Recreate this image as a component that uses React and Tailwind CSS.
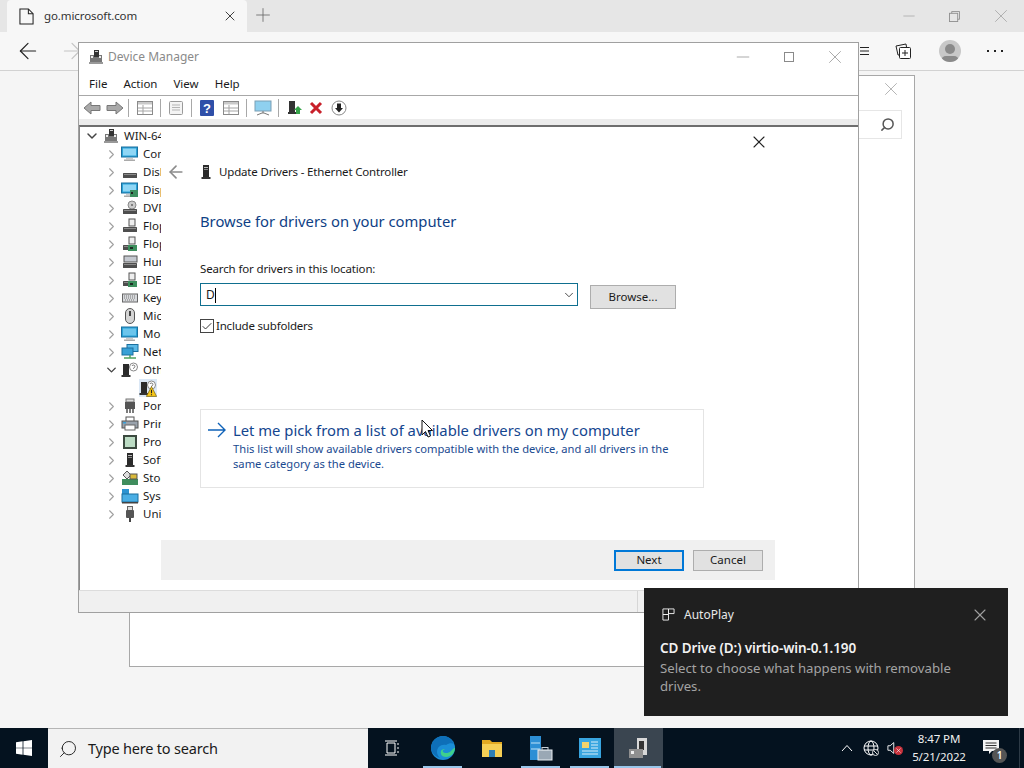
import React from 'react';
import {
  ArrowLeft, ArrowRight, X, Plus, Minus, ChevronDown, ChevronRight, Check, Search,
} from 'lucide-react';

// small device glyphs for the tree, roughly the old mmc icons
function Tower({ className = '' }) {
  return (
    <svg viewBox="0 0 16 16" className={className}>
      <rect x="5" y="1" width="6" height="12" fill="#2b2b2b" />
      <rect x="6" y="3" width="4" height="1" fill="#bbb" />
      <rect x="6" y="5" width="4" height="1" fill="#888" />
      <rect x="3.5" y="13" width="9" height="2" fill="#333" />
    </svg>
  );
}

function Computer() {
  return (
    <svg viewBox="0 0 16 16" className="w-4 h-4">
      <rect x="2" y="6" width="12" height="7" fill="#777" />
      <rect x="3" y="7" width="2" height="2" fill="#eee" />
      <rect x="11" y="7" width="2" height="2" fill="#eee" />
      <rect x="6" y="1" width="5" height="7" fill="#333" />
      <rect x="7" y="2" width="3" height="1" fill="#ccc" />
      <rect x="1" y="13" width="14" height="2" fill="#999" />
    </svg>
  );
}

function Monitor({ card, small }) {
  return (
    <svg viewBox="0 0 18 16" className="w-[18px] h-4">
      <rect x="0.5" y="1" width="16" height="10" fill="#29a3d8" stroke="#1b6f9e" />
      <rect x="2" y="2.5" width="13" height="7" fill={small ? '#6cc5ec' : '#8fd6f5'} />
      <rect x="5" y="12" width="7" height="1.5" fill="#ccc" />
      <rect x="3" y="13.5" width="11" height="1.5" fill="#aaa" />
      {card && <rect x="9" y="8" width="8" height="7" fill="#3d8f5f" />}
      {card && <rect x="10" y="10" width="2" height="2" fill="#222" />}
    </svg>
  );
}

function Drive({ top, card, kb }) {
  return (
    <svg viewBox="0 0 16 16" className="w-4 h-4">
      {top === 'disc' && <circle cx="10" cy="5" r="4" fill="#ccc" stroke="#888" />}
      {top === 'disc' && <circle cx="10" cy="5" r="1" fill="#666" />}
      {top === 'floppy' && <rect x="7" y="1" width="6" height="7" fill="#eee" stroke="#555" />}
      {kb && <rect x="2" y="2" width="13" height="6" fill="#c5c9d0" stroke="#555" />}
      <rect x="1" y="9" width="14" height="5" rx="0.5" fill="#4e4e4e" />
      <rect x="2" y="10" width="12" height="1" fill="#8a8a8a" />
      {card && <rect x="6" y="9" width="9" height="6" fill="#3c8e5c" />}
      {card && <rect x="8" y="11" width="3" height="2" fill="#1d2b22" />}
    </svg>
  );
}

function TreeGlyph({ kind }) {
  switch (kind) {
    case 'computer': return <Monitor />;
    case 'disk': return <Drive />;
    case 'display': return <Monitor card />;
    case 'dvd': return <Drive top="disc" />;
    case 'floppy': return <Drive top="floppy" />;
    case 'floppycard': return <Drive top="floppy" card />;
    case 'hid': return <Drive kb />;
    case 'ide': return <Drive top="floppy" card />;
    case 'keyboard':
      return (
        <svg viewBox="0 0 16 16" className="w-4 h-4">
          <rect x="0.5" y="4" width="15" height="8" fill="#d8dadd" stroke="#666" />
          <path d="M2 6h12M2 8h12M3 10h10" stroke="#777" strokeDasharray="1 1" />
        </svg>
      );
    case 'mouse':
      return (
        <svg viewBox="0 0 16 16" className="w-4 h-4">
          <rect x="3.5" y="0.5" width="9" height="15" rx="4.5" fill="#d5d5d5" stroke="#555" />
          <rect x="7" y="3" width="2" height="5" fill="#444" />
        </svg>
      );
    case 'monitor': return <Monitor small />;
    case 'network':
      return (
        <svg viewBox="0 0 18 16" className="w-[18px] h-4">
          <rect x="6" y="0.5" width="11" height="7" fill="#5cb9e6" stroke="#1b6f9e" />
          <rect x="1" y="4" width="11" height="7" fill="#37a0d6" stroke="#1b6f9e" />
          <path d="M3 14h12M9 11v3" stroke="#4fa35f" strokeWidth="1.5" />
        </svg>
      );
    case 'other':
      return (
        <svg viewBox="0 0 18 16" className="w-[18px] h-4">
          <rect x="2" y="2" width="6" height="11" fill="#2b2b2b" />
          <rect x="0.5" y="13" width="9" height="2" fill="#333" />
          <circle cx="12.5" cy="5" r="4" fill="#fff" stroke="#888" />
          <path d="M11 4a1.5 1.5 0 1 1 1.5 2v.7" stroke="#777" fill="none" />
        </svg>
      );
    case 'port':
      return (
        <svg viewBox="0 0 16 16" className="w-4 h-4">
          <rect x="4" y="1" width="8" height="3" fill="#ddd" stroke="#777" />
          <rect x="3" y="4" width="10" height="7" fill="#555" />
          <path d="M5 11v4M8 11v4M11 11v4" stroke="#444" strokeWidth="1.4" />
        </svg>
      );
    case 'printer':
      return (
        <svg viewBox="0 0 18 16" className="w-[18px] h-4">
          <rect x="5" y="1" width="8" height="5" fill="#fff" stroke="#555" />
          <rect x="1" y="5" width="16" height="7" fill="#9aa3ad" stroke="#555" />
          <rect x="4" y="9" width="10" height="5" fill="#fff" stroke="#666" />
          <rect x="2" y="6" width="3" height="1.5" fill="#3aa0d8" />
        </svg>
      );
    case 'cpu':
      return (
        <svg viewBox="0 0 16 16" className="w-4 h-4">
          <rect x="1" y="1" width="14" height="14" fill="#3c4a40" />
          <rect x="3" y="3" width="10" height="10" fill="#bcdcc4" />
        </svg>
      );
    case 'software': return <Tower className="w-4 h-4" />;
    case 'storage':
      return (
        <svg viewBox="0 0 18 16" className="w-[18px] h-4">
          <path d="M2 5l4-4 4 4-4 4z" fill="#ddd" stroke="#555" />
          <rect x="1" y="9" width="16" height="6" fill="#3f8d5d" />
          <rect x="9" y="4" width="7" height="5" fill="#d9b93a" stroke="#555" />
        </svg>
      );
    case 'system':
      return (
        <svg viewBox="0 0 18 16" className="w-[18px] h-4">
          <rect x="1" y="1" width="7" height="5" fill="#2c93d1" />
          <rect x="1" y="6" width="16" height="8" fill="#4aaee4" stroke="#1b6f9e" />
          <rect x="1" y="14" width="16" height="1.5" fill="#444" />
        </svg>
      );
    case 'usb':
      return (
        <svg viewBox="0 0 16 16" className="w-4 h-4">
          <rect x="5.5" y="0.5" width="5" height="4" fill="#ddd" stroke="#666" />
          <rect x="4" y="4" width="8" height="8" rx="1" fill="#555" />
          <path d="M8 12v4" stroke="#444" strokeWidth="2" />
        </svg>
      );
    default: return null;
  }
}

const treeRows = [
  { name: 'Computer', kind: 'computer' },
  { name: 'Disk drives', kind: 'disk' },
  { name: 'Display adapters', kind: 'display' },
  { name: 'DVD/CD-ROM', kind: 'dvd' },
  { name: 'Floppy disk', kind: 'floppy' },
  { name: 'Floppy drive', kind: 'floppycard' },
  { name: 'Human Interface', kind: 'hid' },
  { name: 'IDE ATA', kind: 'ide' },
  { name: 'Keyboards', kind: 'keyboard' },
  { name: 'Mice', kind: 'mouse' },
  { name: 'Monitors', kind: 'monitor' },
  { name: 'Network', kind: 'network' },
  { name: 'Other devices', kind: 'other', open: true },
  { name: '', kind: 'child' },
  { name: 'Ports', kind: 'port' },
  { name: 'Print queues', kind: 'printer' },
  { name: 'Processors', kind: 'cpu' },
  { name: 'Software', kind: 'software' },
  { name: 'Storage', kind: 'storage' },
  { name: 'System', kind: 'system' },
  { name: 'Universal', kind: 'usb' },
];

function WarnBadge() {
  return (
    <svg viewBox="0 0 10 10" className="w-[11px] h-[11px] absolute right-0 bottom-0">
      <path d="M5 0.5L9.7 9.5H0.3z" fill="#f5c518" stroke="#6b5a10" strokeWidth="0.6" />
      <path d="M5 3.5v3M5 7.5v1" stroke="#222" strokeWidth="1" />
    </svg>
  );
}

function TreeRow({ row }) {
  if (row.kind === 'child') {
    return (
      <div className="h-[18px] flex items-center pl-[59px]">
        <div className="relative w-[18px] h-[18px] bg-[#dbe8f6] flex items-center">
          <TreeGlyph kind="other" />
          <WarnBadge />
        </div>
      </div>
    );
  }
  return (
    <div className="h-[18px] flex items-center pl-[24px] whitespace-nowrap">
      <span className="w-[15px] shrink-0 flex justify-center">
        {row.open
          ? <ChevronDown size={16} strokeWidth={2.2} className="text-[#444]" />
          : <ChevronRight size={17} strokeWidth={1.7} className="text-[#a0a0a0]" />}
      </span>
      <span className="ml-px w-5 shrink-0 flex justify-center"><TreeGlyph kind={row.kind} /></span>
      <span className="ml-[3px] text-[11.5px] text-[#1a1a1a]">{row.name}</span>
    </div>
  );
}

function ToolSep() {
  return <span className="w-px h-[18px] bg-[#a8a8a8] mx-[7px]" />;
}

function SheetIcon({ children }) {
  return (
    <svg viewBox="0 0 16 16" className="w-4 h-4">
      <rect x="0.5" y="1.5" width="15" height="13" fill="#fff" stroke="#8a8a8a" />
      <rect x="1" y="2" width="14" height="2.5" fill="#c9c9c9" />
      <path d="M1 8h14M1 11h14M6 5v9" stroke="#a5a5a5" />
      {children}
    </svg>
  );
}

function DeviceToolbar() {
  return (
    <div className="h-[23px] flex items-center pl-[4px] bg-white">
      <svg viewBox="0 0 18 14" className="w-[18px] h-[14px]">
        <path d="M8 1L1 7l7 6V9.5h9v-5H8z" fill="#a9a9a9" stroke="#777" />
      </svg>
      <svg viewBox="0 0 18 14" className="w-[18px] h-[14px] ml-[5px]">
        <path d="M10 1l7 6-7 6V9.5H1v-5h9z" fill="#a9a9a9" stroke="#777" />
      </svg>
      <span className="w-px h-[18px] bg-[#a8a8a8] ml-[4px] mr-[8px]" />
      <SheetIcon />
      <ToolSep />
      <svg viewBox="0 0 16 16" className="w-4 h-4">
        <rect x="1.5" y="1.5" width="13" height="13" rx="1" fill="#f4f4f4" stroke="#9a9a9a" />
        <path d="M4 5h8M4 7.5h8M4 10h8" stroke="#b5b5b5" />
      </svg>
      <ToolSep />
      <svg viewBox="0 0 14 16" className="w-[14px] h-4 mx-px">
        <rect width="14" height="16" rx="1" fill="#2f4fa8" />
        <text x="7" y="13" textAnchor="middle" fontSize="13" fontWeight="700" fill="#fff" fontFamily="Liberation Sans, sans-serif">?</text>
      </svg>
      <span className="w-[8px]" />
      <SheetIcon />
      <ToolSep />
      <svg viewBox="0 0 18 16" className="w-[18px] h-4">
        <rect x="1" y="1" width="16" height="10" fill="#8fd0ef" stroke="#7b9fb5" />
        <path d="M9 11v2M3 15l5-2h2l5 2" stroke="#777" fill="none" />
      </svg>
      <span className="w-px h-[18px] bg-[#a8a8a8] ml-[6px] mr-[8px]" />
      <svg viewBox="0 0 16 16" className="w-4 h-4">
        <rect x="2" y="1" width="6" height="11" fill="#333" />
        <rect x="1" y="12" width="8" height="2" fill="#333" />
        <path d="M11 6l4 4h-2v4H9v-4H7z" fill="#37a34a" />
      </svg>
      <span className="w-[6px]" />
      <svg viewBox="0 0 14 14" className="w-[14px] h-[14px]">
        <path d="M2 2l10 10M12 2L2 12" stroke="#c8202a" strokeWidth="3" />
      </svg>
      <span className="w-[8px]" />
      <svg viewBox="0 0 16 16" className="w-4 h-4">
        <circle cx="8" cy="8" r="7" fill="#fff" stroke="#888" />
        <path d="M6 3.5h4V8h2l-4 4.5L4 8h2z" fill="#222" />
      </svg>
    </div>
  );
}

function UpdateDriversDialog() {
  return (
    <div className="w-[614px] h-[453px] bg-white flex flex-col">
      <div className="flex-1 flex flex-col">
        <div className="h-[25px] flex justify-end items-end pr-[6px]">
          <X size={20} strokeWidth={1.3} className="text-[#222]" />
        </div>
        <div className="mt-[10px] h-[20px] flex items-center pl-[5px]">
          <ArrowLeft size={20} strokeWidth={2} className="text-[#8c8c8c]" />
          <Tower className="w-4 h-4 ml-[12px]" />
          <span className="ml-[5px] text-[11.5px] text-[#1a1a1a] tracking-[-0.17px]">Update Drivers - Ethernet Controller</span>
        </div>
        <div className="pl-[39px] pr-[71px] flex-1 flex flex-col">
          <h1 className="mt-[27px] text-[14.8px] leading-[24px] text-[#0f3f85] font-normal">Browse for drivers on your computer</h1>
          <div className="mt-[28px] text-[11.5px] leading-[16px] text-[#1a1a1a] tracking-[-0.14px]">Search for drivers in this location:</div>
          <div className="mt-[6px] flex items-start">
            <div className="w-[378px] h-[23px] border border-[#0f6f8f] flex items-center pl-[5px]">
              <span className="mt-px text-[12px] text-[#1a1a1a]">D</span>
              <span className="mt-px w-px h-[15px] bg-black" />
              <ChevronDown size={14} strokeWidth={1.5} className="ml-auto mr-[1px] text-[#333]" />
            </div>
            <button className="ml-[12px] mt-[2px] w-[86px] h-[24px] bg-[#e1e1e1] border border-[#adadad] text-[11.5px] text-[#1a1a1a]">Browse...</button>
          </div>
          <label className="mt-[9px] flex items-center">
            <span className="w-[14px] h-[14px] border border-[#444] flex items-center justify-center">
              <Check size={13} strokeWidth={1.8} className="text-[#222]" />
            </span>
            <span className="ml-[2px] text-[11.5px] text-[#1a1a1a] leading-[16px] tracking-[-0.2px]">Include subfolders</span>
          </label>
          <div className="mt-[75px] h-[79px] border border-[#e4e4e4] flex pl-[7px] pt-[9px]">
            <svg viewBox="0 0 18 16" className="w-[18px] h-4 mt-[3px] shrink-0">
              <path d="M0 8h17M10 1l7 7-7 7" fill="none" stroke="#0f62b8" strokeWidth="1.4" />
            </svg>
            <div className="ml-[7px]">
              <div className="text-[14.8px] leading-[22px] text-[#14468f]">Let me pick from a list of available drivers on my computer</div>
              <div className="text-[11.2px] leading-[15px] text-[#1a4a90] w-[450px]">This list will show available drivers compatible with the device, and all drivers in the same category as the device.</div>
            </div>
          </div>
        </div>
      </div>
      <div className="h-[40px] bg-[#f0f0f0] flex items-center justify-end gap-[9px] pr-[12px]">
        <button className="w-[70px] h-[21px] bg-[#e1e1e1] border-2 border-[#0078d7] text-[11.5px] leading-none text-[#1a1a1a]">Next</button>
        <button className="w-[70px] h-[21px] bg-[#e1e1e1] border border-[#adadad] text-[11.5px] leading-none text-[#1a1a1a]">Cancel</button>
      </div>
    </div>
  );
}

function DeviceManager() {
  return (
    <div className="absolute left-[78px] top-[42px] w-[781px] h-[571px] bg-white border border-[#a0a0a0] flex flex-col">
      <div className="h-[28px] flex items-center pl-[9px] shrink-0">
        <span className="w-4 h-4"><Computer /></span>
        <span className="ml-[4px] text-[12px] text-[#8a8a8a]">Device Manager</span>
        <Minus size={20} strokeWidth={1} className="ml-auto text-[#9a9a9a]" />
        <svg viewBox="0 0 10 10" className="w-[10px] h-[10px] ml-[31px]">
          <rect x="0.5" y="0.5" width="9" height="9" fill="none" stroke="#8a8a8a" />
        </svg>
        <X size={22} strokeWidth={0.9} className="ml-[30px] mr-[12px] text-[#999]" />
      </div>
      <div className="h-[25px] shrink-0 border-b border-[#a8a8a8] flex items-center pl-[10px] pt-[2px] gap-[16px] text-[11.5px] text-[#1a1a1a]">
        <span>File</span><span>Action</span><span>View</span><span>Help</span>
      </div>
      <DeviceToolbar />
      <div className="h-[6px] bg-[#ececec] shrink-0" />
      <div className="flex-1 min-h-0 flex border-t-2 border-[#6e6e6e] border-l border-l-[#8a8a8a]">
        <div className="w-[81px] shrink-0 overflow-hidden">
          <div className="h-[18px] flex items-center pl-[4px] whitespace-nowrap">
            <ChevronDown size={16} strokeWidth={2.2} className="text-[#444] shrink-0" />
            <span className="ml-[3px] w-4 h-4 shrink-0"><Computer /></span>
            <span className="ml-[5px] text-[11.5px] text-[#1a1a1a]">WIN-64TOOLS</span>
          </div>
          {treeRows.map((row, i) => <TreeRow key={i} row={row} />)}
        </div>
        <UpdateDriversDialog />
      </div>
      <div className="h-[22px] shrink-0 bg-[#f0f0f0] border-t border-[#dcdcdc] flex">
        <span className="ml-[558px] w-px bg-[#d6d6d6]" />
      </div>
    </div>
  );
}

function BrowserChrome() {
  return (
    <div className="flex-1 flex flex-col bg-[#f5f5f5]">
      <div className="h-[32px] bg-[#e6e6e6] flex items-end">
        <div className="ml-[7px] w-[240px] h-[32px] bg-[#f7f7f7] rounded-t-[4px] flex items-center pl-[12px] pr-[9px]">
          <svg viewBox="0 0 16 18" className="w-[15px] h-[17px]">
            <path d="M1 1h9l5 5v11H1z" fill="none" stroke="#222" strokeWidth="1.1" />
            <path d="M10 1v5h5" fill="none" stroke="#222" strokeWidth="1.1" />
          </svg>
          <span className="ml-[10px] text-[11.5px] text-[#333] tracking-[-0.1px]">go.microsoft.com</span>
          <X size={16} strokeWidth={1.4} className="ml-auto text-[#333]" />
        </div>
        <Plus size={22} strokeWidth={0.9} className="ml-[5px] mb-[6px] text-[#666]" />
        <div className="ml-auto flex items-center h-[32px] text-[#a5a5a5]">
          <Minus size={18} strokeWidth={1} />
          <svg viewBox="0 0 12 12" className="w-[11px] h-[11px] ml-[31px]">
            <rect x="0.5" y="2.5" width="9" height="9" fill="none" stroke="#8f8f8f" />
            <path d="M3 2.5V0.5h8.5V9H9.5" fill="none" stroke="#8f8f8f" />
          </svg>
          <X size={22} strokeWidth={0.9} className="ml-[30px] mr-[12px]" />
        </div>
      </div>
      <div className="h-[39px] bg-[#f7f7f7] border-b border-[#d2d2d2] flex items-center">
        <ArrowLeft size={26} strokeWidth={1.1} className="ml-[15px] text-[#222]" />
        <ArrowRight size={26} strokeWidth={1.1} className="ml-[18px] text-[#c4c4c4]" />
        <div className="ml-auto flex items-center">
          <svg viewBox="0 0 12 10" className="w-[12px] h-[10px]">
            <path d="M3 1.5h9M3 5h9M3 8.5h9" fill="none" stroke="#222" />
          </svg>
          <svg viewBox="0 0 18 18" className="w-[18px] h-[18px] ml-[26px]">
            <rect x="4.5" y="5.5" width="11" height="11" rx="1" fill="#fff" stroke="#222" />
            <path d="M4 13H3L1 4l10-2 .5 3" fill="none" stroke="#222" />
            <path d="M10 8v6M7 11h6" stroke="#222" />
          </svg>
          <span className="ml-[26px] w-[22px] h-[22px] rounded-full bg-[#c8c8c8] relative overflow-hidden flex justify-center">
            <span className="mt-[4px] w-[10px] h-[10px] rounded-full bg-[#8a8a8a]" />
            <span className="absolute -bottom-[4px] w-[18px] h-[10px] rounded-full bg-[#8a8a8a]" />
          </span>
          <span className="ml-[26px] mr-[21px] flex gap-[5px]">
            <span className="w-[2px] h-[2px] bg-[#222]" />
            <span className="w-[2px] h-[2px] bg-[#222]" />
            <span className="w-[2px] h-[2px] bg-[#222]" />
          </span>
        </div>
      </div>
    </div>
  );
}

function PageDialog() {
  return (
    <div className="absolute left-[129px] top-[75px] w-[786px] h-[592px] bg-white border border-[#a8a8a8] flex flex-col items-end">
      <X size={22} strokeWidth={0.9} className="mt-[2px] mr-[12px] text-[#a5a5a5]" />
      <div className="mt-[10px] mr-[12px] w-[43px] h-[29px] border border-[#e6e6e6] border-l-0 flex items-center justify-end pr-[6px]">
        <Search size={15} strokeWidth={2.4} className="text-[#555] -scale-x-100" />
      </div>
    </div>
  );
}

function Toast() {
  return (
    <div className="absolute left-[644px] top-[588px] w-[364px] h-[128px] bg-[#1f1f1f] px-[16px] flex flex-col">
      <div className="h-[21px] mt-[16px] flex items-center">
        <svg viewBox="0 0 14 14" className="w-[13px] h-[13px] ml-[2px]">
          <path d="M1 1h6v6H1zM7 1h6v5H7zM1 7h6v6H1z" fill="none" stroke="#f0f0f0" strokeWidth="1" />
        </svg>
        <span className="ml-[9px] text-[12px] text-[#e8e8e8]">AutoPlay</span>
        <X size={20} strokeWidth={1.3} className="ml-auto mr-[2px] text-[#a0a0a0]" />
      </div>
      <div className="mt-[14px] text-[13.5px] leading-[18px] font-semibold text-[#f2f2f2] tracking-[-0.1px]">CD Drive (D:) virtio-win-0.1.190</div>
      <div className="mt-[2px] text-[13.2px] leading-[18px] text-[#a3a3a3] w-[320px]">Select to choose what happens with removable drives.</div>
    </div>
  );
}

function Taskbar() {
  const apps = [
    { on: true, icon: (
      <svg viewBox="0 0 24 24" className="w-6 h-6">
        <circle cx="12" cy="12" r="12" fill="#1b8ed6" />
        <path d="M24 12c0 5-4 9-9 9-4 0-6-3-5-6 1-2 4-2 4-2s-3 1-2 3c1 1 5 2 8-1 2-2 4-4 4-3z" fill="#3fd08c" />
        <path d="M15 9c-5-1-9 2-9 7 0 2 1 4 3 6C3 20 0 16 0 12 0 5 6 0 12 0c5 0 9 3 11 8-2-1-5-1-8 1z" fill="#0e6fb8" />
      </svg>
    ) },
    { on: false, icon: (
      <svg viewBox="0 0 22 22" className="w-[22px] h-[22px]">
        <path d="M1 3h8l2 2h10v3H1z" fill="#e2a922" />
        <rect x="1" y="7" width="20" height="13" fill="#f6cf55" />
        <rect x="8" y="13" width="6" height="7" fill="#2f7fb5" />
      </svg>
    ) },
    { on: true, icon: (
      <svg viewBox="0 0 24 26" className="w-6 h-[26px]">
        <rect x="1" y="1" width="11" height="24" fill="#2d8fd5" />
        <path d="M2 8h9M2 14h9" stroke="#bfe2f7" />
        <rect x="9" y="15" width="14" height="10" fill="#9aa8b5" stroke="#e8eef3" />
        <rect x="13" y="12.5" width="6" height="3" fill="none" stroke="#c9d2d9" />
      </svg>
    ) },
    { on: true, icon: (
      <svg viewBox="0 0 22 20" className="w-[22px] h-5">
        <rect width="22" height="20" fill="#38a5e0" />
        <rect x="3" y="4" width="7" height="6" fill="#f2d36b" />
        <path d="M12 4h7M12 7h7M12 10h7M3 13h16M3 16h16" stroke="#d9effa" />
      </svg>
    ) },
    { on: true, active: true, icon: (
      <svg viewBox="0 0 24 24" className="w-6 h-6">
        <rect x="10" y="2" width="10" height="17" fill="#d8d8d8" />
        <rect x="12" y="5" width="5" height="9" fill="#333" />
        <rect x="2" y="13" width="14" height="9" fill="#8f8f8f" />
        <rect x="4" y="15" width="3" height="3" fill="#eee" />
      </svg>
    ) },
  ];
  return (
    <div className="h-[40px] bg-[#04121f] flex items-stretch text-white">
      <div className="w-[48px] flex items-center justify-center">
        <svg viewBox="0 0 16 16" className="w-4 h-4">
          <path d="M0 2.2l6.6-.9v6.4H0zM7.4 1.2L16 0v7.7H7.4zM0 8.3h6.6v6.4L0 13.8zM7.4 8.3H16V16l-8.6-1.2z" fill="#fff" />
        </svg>
      </div>
      <div className="w-[320px] bg-[#f2f2f2] border-t border-[#b5b5b5] flex items-center pl-[10px] text-[#1a1a1a]">
        <Search size={20} strokeWidth={1.1} className="-scale-x-100" />
        <span className="ml-[10px] text-[14.5px] tracking-[-0.2px]">Type here to search</span>
      </div>
      <div className="w-[48px] flex items-center justify-center">
        <svg viewBox="0 0 16 16" className="w-4 h-4">
          <path d="M3 3h8v10H3zM1 1h12M1 15h12M14 3v2M14 7v2M14 11v2" fill="none" stroke="#fff" />
        </svg>
      </div>
      <div className="flex ml-[2px]">
        {apps.map((app, i) => (
          <div key={i} className={`w-[49px] relative flex items-center justify-center ${app.active ? 'bg-[#3a4550]' : ''}`}>
            {app.icon}
            {app.on && <span className={`absolute bottom-0 h-[2px] bg-[#99c6ea] ${app.active ? 'left-0 right-[2px]' : 'left-[5px] right-[5px]'}`} />}
          </div>
        ))}
      </div>
      <div className="ml-auto flex items-center">
        <svg viewBox="0 0 12 8" className="w-[12px] h-[8px]">
          <path d="M1 7l5-5.5L11 7" fill="none" stroke="#fff" />
        </svg>
        <svg viewBox="0 0 16 16" className="w-4 h-4 ml-[10px]">
          <circle cx="8" cy="8" r="7" fill="none" stroke="#fff" />
          <ellipse cx="8" cy="8" rx="3" ry="7" fill="none" stroke="#fff" />
          <path d="M1 6h14M1 10h14" stroke="#fff" />
          <circle cx="12.5" cy="12.5" r="3" fill="#04121f" stroke="#ddd" />
          <path d="M10.5 10.5l4 4" stroke="#ddd" />
        </svg>
        <span className="relative w-[16px] h-4 ml-[8px]">
          <svg viewBox="0 0 10 16" className="w-[9px] h-4">
            <path d="M1 5.5h2.5L7.5 2v12l-4-3.5H1z" fill="none" stroke="#fff" />
          </svg>
          <span className="absolute left-[7px] top-[6px] w-[9px] h-[9px] rounded-full bg-[#c8323c] flex items-center justify-center">
            <X size={7} strokeWidth={2} className="text-white" />
          </span>
        </span>
        <div className="ml-[2px] w-[68px] flex flex-col items-center text-[11.5px] leading-[18px] text-[#f0f0f0] tracking-[-0.1px]">
          <span>8:47 PM</span>
          <span>5/21/2022</span>
        </div>
        <div className="relative w-[40px] h-full ml-[6px] flex items-center pl-[4px]">
          <svg viewBox="0 0 16 15" className="w-4 h-[15px] -mt-[2px]">
            <path d="M0 0h16v11H9l-3 3v-3H0z" fill="#f4f4f4" />
            <path d="M2.5 3h11M2.5 5.5h11M2.5 8h11" stroke="#333" />
          </svg>
          <span className="absolute right-[12px] bottom-[5px] w-[15px] h-[15px] rounded-full bg-[#555] text-[10px] leading-[15px] text-center font-semibold">1</span>
        </div>
        <span className="w-px h-full bg-[#2d3a46] mr-[4px]" />
      </div>
    </div>
  );
}

export default function App() {
  return (
    <div className="relative w-[1024px] h-[768px] overflow-hidden flex flex-col font-['Noto_Sans',sans-serif]">
      <BrowserChrome />
      <PageDialog />
      <DeviceManager />
      <Toast />
      {/* mouse pointer over the link */}
      <svg viewBox="0 0 12 19" className="absolute left-[421px] top-[419px] w-3 h-[19px]">
        <path d="M1 1v15l3.5-3.5L7 18l2.5-1L7 11.5h4.5z" fill="#fff" stroke="#111" />
      </svg>
      <Taskbar />
    </div>
  );
}
